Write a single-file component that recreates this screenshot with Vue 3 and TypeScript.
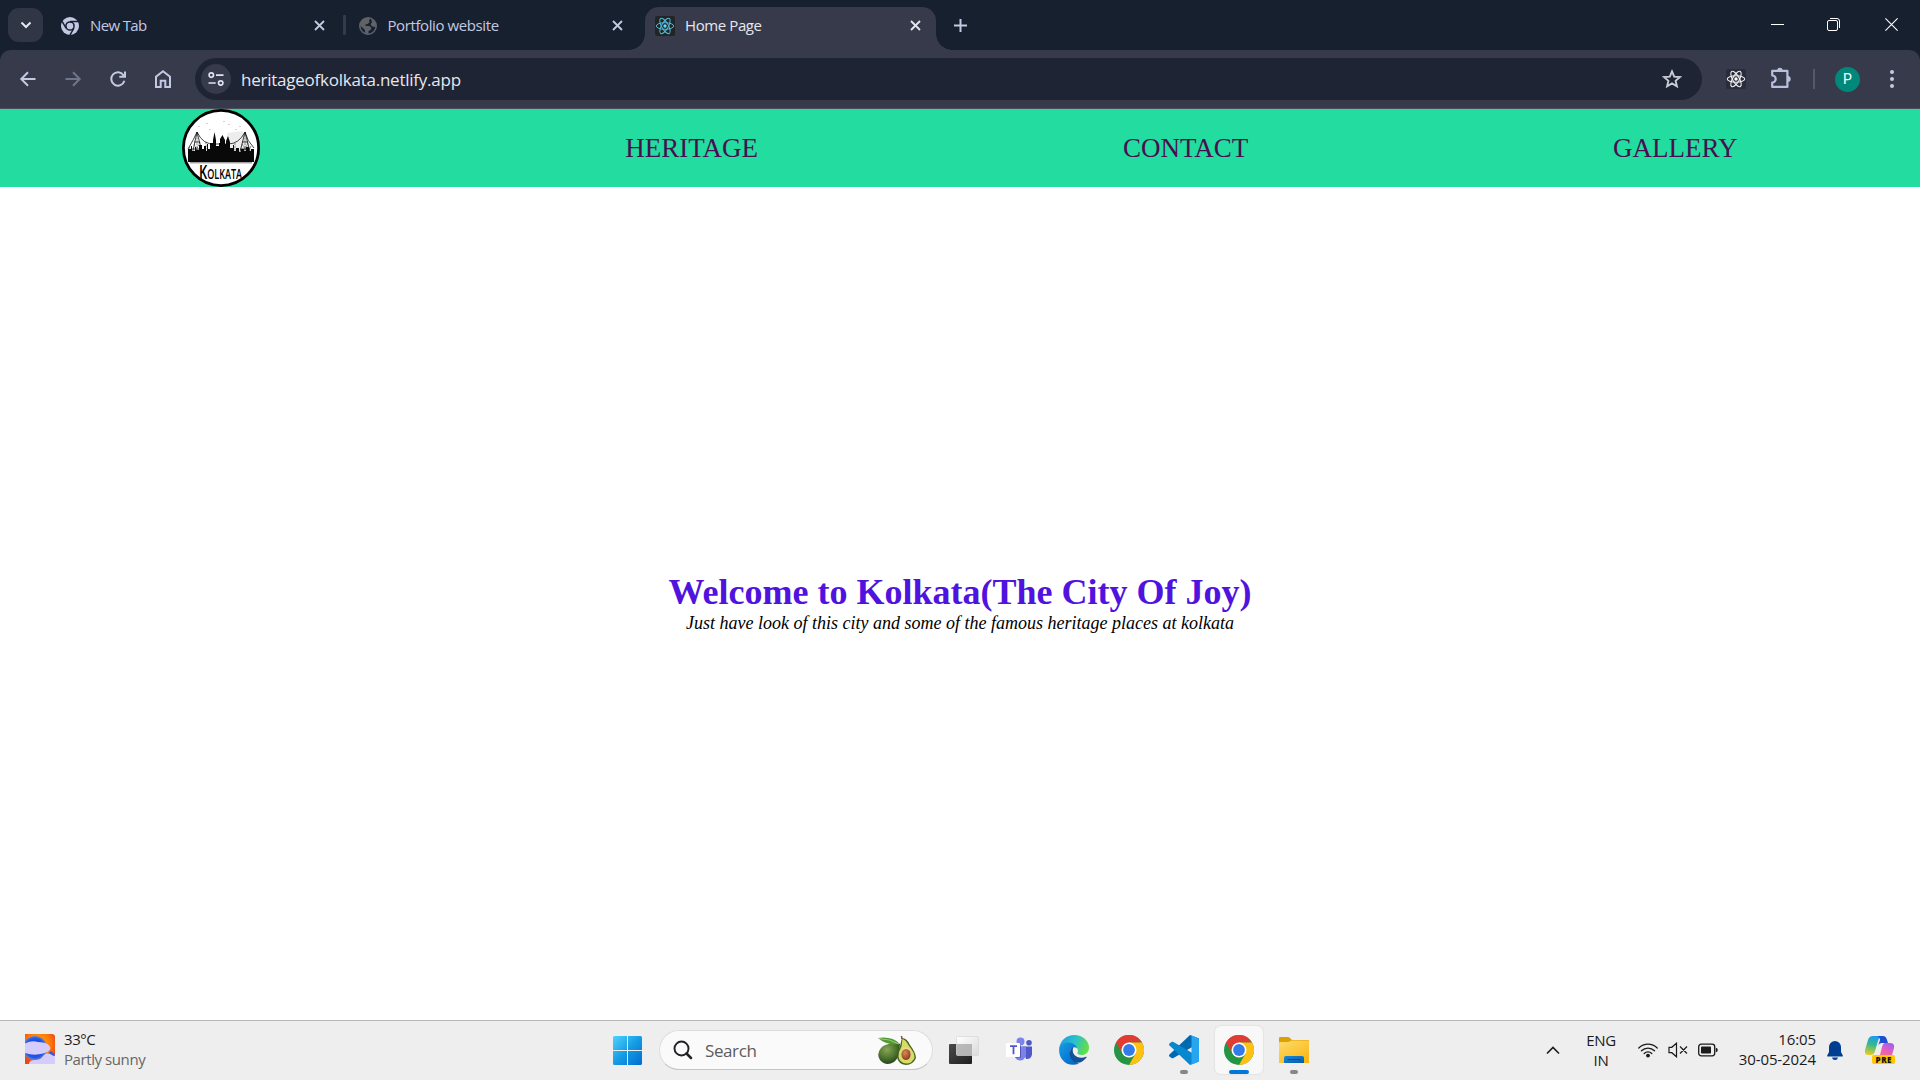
<script setup lang="ts">
interface Tab {
  title: string
  icon: 'chrome' | 'globe' | 'react'
  active?: boolean
}

const tabs: Tab[] = [
  { title: 'New Tab', icon: 'chrome' },
  { title: 'Portfolio website', icon: 'globe' },
  { title: 'Home Page', icon: 'react', active: true },
]

const links: string[] = ['HERITAGE', 'CONTACT', 'GALLERY']
const orbits: number[] = [0, 60, 120]
</script>

<template>
  <div class="screen">
    <!-- Tab strip -->
    <header class="strip">
      <button class="tab-search">
        <svg width="12" height="8" viewBox="0 0 12 8"><path d="M1.5 1.5 6 6l4.500-4.500" fill="none" stroke="#e6e8f0" stroke-width="2" /></svg>
      </button>
      <div class="tabs">
        <div v-for="tab in tabs" :key="tab.title" class="tab" :class="{ active: tab.active }">
          <svg v-if="tab.icon === 'chrome'" class="fav" width="18" height="18" viewBox="0 0 18 18">
            <circle cx="9" cy="9" r="9" fill="#c3c9e3" />
            <circle cx="9" cy="9" r="4.100" fill="none" stroke="#17202f" stroke-width="1.500" />
            <path d="M9 4.500h8M5.100 11.250 1.100 4.320M12.900 11.250 8.900 18.180" stroke="#17202f" stroke-width="1.500" />
          </svg>
          <svg v-else-if="tab.icon === 'globe'" class="fav" width="18" height="18" viewBox="0 0 18 18">
            <circle cx="9" cy="9" r="8.200" fill="#17202f" stroke="#5f6368" stroke-width="1.600" />
            <path d="M1.500 6 4 2 9 .8 11.500 1.500 10 3.500 10.500 5.500 8.500 7 6.500 7.500V9H10.500L12.500 11 11.500 13 9.500 14V17L6 16.500V13.500L4.500 11.500 1 8.500Z" fill="#5f6368" />
            <path d="M12 2 16 5 17 9.500 15 10 12.500 9 11.500 7 13 5.500Z" fill="#5f6368" />
          </svg>
          <svg v-else class="fav react" width="20" height="20" viewBox="0 0 20 20">
            <rect width="20" height="20" rx="2" fill="#222426" />
            <g fill="none" stroke="#53b9d4" stroke-width="1">
              <ellipse v-for="a in orbits" :key="a" cx="10" cy="10" rx="8.700" ry="3.300" :transform="`rotate(${a} 10 10)`" />
            </g>
            <circle cx="10" cy="10" r="1.700" fill="#61dafb" />
          </svg>
          <span class="title">{{ tab.title }}</span>
          <svg class="close" width="11" height="11" viewBox="0 0 11 11"><path d="m1 1 9 9M10 1l-9 9" fill="none" stroke="currentColor" stroke-width="1.800" /></svg>
        </div>
      </div>
      <svg class="plus" width="13" height="13" viewBox="0 0 13 13"><path d="M6.500 0v13M0 6.500h13" stroke="#c3c9e3" stroke-width="2" /></svg>
      <div class="window-controls">
        <svg width="13" height="13" viewBox="0 0 13 13"><path d="M0 6.500h13" stroke="#fff" /></svg>
        <svg width="13" height="13" viewBox="0 0 13 13" fill="none" stroke="#fff">
          <rect x=".5" y="2.500" width="10" height="10" rx="1.500" />
          <path d="M3 .5h7a2.500 2.500 0 0 1 2.500 2.500v7" />
        </svg>
        <svg width="13" height="13" viewBox="0 0 13 13"><path d="m.4.400 12.200 12.200M12.600.400.400 12.600" stroke="#fff" stroke-width="1.100" /></svg>
      </div>
    </header>

    <!-- Toolbar -->
    <div class="toolbar-back">
      <div class="toolbar">
        <div class="nav-icons">
          <svg width="20" height="20" viewBox="0 0 20 20" fill="none" stroke="#c3c9e3" stroke-width="2"><path d="M17.500 10H4M10 3.300 3.300 10l6.700 6.700" /></svg>
          <svg width="20" height="20" viewBox="0 0 20 20" fill="none" stroke="#70768a" stroke-width="2"><path d="M2.500 10H16M10 3.300l6.700 6.700-6.700 6.700" /></svg>
          <svg width="20" height="20" viewBox="0 0 20 20" fill="none" stroke="#c3c9e3" stroke-width="2"><path d="M16.400 11.800A6.700 6.700 0 1 1 15.500 6.200L17 7.500M17 2.500V7.700H11.300" /></svg>
          <svg width="20" height="20" viewBox="0 0 20 20" fill="none" stroke="#c3c9e3" stroke-width="2"><path d="M3 18V7.700L10 2.200l7 5.500V18h-4.700v-6.200H7.700V18Z" /></svg>
        </div>
        <div class="omnibox">
          <span class="site-info">
            <svg width="16" height="14" viewBox="0 0 16 14" fill="none" stroke="#dfe2f0" stroke-width="1.700">
              <circle cx="3.300" cy="3.100" r="2.200" /><path d="M8 3.100h7.500M.5 11h7.200" /><circle cx="12.700" cy="11" r="2.200" />
            </svg>
          </span>
          <span class="url">heritageofkolkata.netlify.app</span>
          <svg class="star" width="20" height="20" viewBox="0 0 20 20"><path d="m10 2.400 2.200 5.200 5.700.5-4.300 3.700 1.300 5.500L10 14.400l-4.900 2.900 1.300-5.500-4.300-3.700 5.700-.5Z" fill="none" stroke="#c9ccd6" stroke-width="1.900" /></svg>
        </div>
        <div class="extensions">
          <svg width="20" height="20" viewBox="0 0 20 20">
            <rect width="20" height="20" rx="2" fill="#292d3a" />
            <g fill="none" stroke="#f0f0f3" stroke-width="1.100">
              <ellipse v-for="a in orbits" :key="a" cx="10" cy="10" rx="8.700" ry="3.300" :transform="`rotate(${a} 10 10)`" />
            </g>
            <circle cx="10" cy="10" r="1.700" fill="#fff" />
          </svg>
          <svg class="puzzle" width="22" height="22" viewBox="0 0 22 22">
            <path d="M2.200 3.900h15.200V19.900H2.200V15.500a3.500 3.500 0 0 0 0-7Z" fill="none" stroke="#b8c0de" stroke-width="2.200" stroke-linejoin="round" />
            <path d="M7.200 3.500a2.700 2.700 0 0 1 5.400 0ZM17.800 9a2.900 2.900 0 0 1 0 5.800Z" fill="#b8c0de" />
          </svg>
          <i class="divider"></i>
          <span class="avatar">P</span>
          <svg class="dots" width="4" height="18" viewBox="0 0 4 18" fill="#c3c9e3"><circle cx="2" cy="2" r="2" /><circle cx="2" cy="9" r="2" /><circle cx="2" cy="16" r="2" /></svg>
        </div>
      </div>
    </div>

    <!-- Website -->
    <nav class="site-nav">
      <svg class="logo" width="78" height="78" viewBox="0 0 78 78">
        <circle cx="39" cy="39" r="37.600" fill="#fff" stroke="#000" stroke-width="2.800" />
        <path d="M45 24 60 22 69 38 70 50H45Z" fill="#ededed" />
        <g fill="none" stroke="#111" stroke-width=".8">
          <path d="M6 40Q12 30 15 23 21 36 33 35H46Q57 35 63 23 65 32 72 39" />
          <path d="M15 23 9 51M15 23l7 28M12 33h6M10 40h10M9 47h12M63 23l-7 28M63 23l7 28M60 33h6M58 40h10M57 47h12" />
          <path d="M15 23v28M63 23v28M24 33v18M53 34v18M7 38l6 11M12 35l7 14M18 33l-7 15M69 37l-6 14M60 35l9 14M66 34l-8 15" stroke-width=".5" stroke-dasharray="2 .8" />
          <path d="M17 17v1M25 14v1M47 15v1M54 20v1M28 20v1M58 17v1M42 12v1" stroke-width=".4" />
        </g>
        <path d="M6 53V40H9V37H10V42H13V38H14V41H17V36H20V40H22V37H24V42H25V35H26V40H28V34H31V31L32.500 23 34 31V37H37V34H38V30L40.500 26 43 31V35H44V32L46 27 48 33V39H51V36H52V42H54V39H57V43H59V40H62V42H64V38H67V42H69V40H72V53Z" fill="#090909" />
        <path d="M8 53.800h62" stroke="#555" stroke-width=".8" />
        <text class="logo-text" x="17" y="70" textLength="43" lengthAdjust="spacingAndGlyphs">Kolkata</text>
      </svg>
      <a v-for="link in links" :key="link">{{ link }}</a>
    </nav>
    <main class="hero">
      <h1>Welcome to Kolkata(The City Of Joy)</h1>
      <p>Just have look of this city and some of the famous heritage places at kolkata</p>
    </main>

    <!-- Taskbar -->
    <footer class="taskbar">
      <div class="weather">
        <svg width="30" height="30" viewBox="0 0 30 30">
          <defs>
            <radialGradient id="sky" cx=".45" cy=".35" r=".65"><stop offset="0" stop-color="#ffb000" /><stop offset=".6" stop-color="#ff7b08" /><stop offset="1" stop-color="#eb451d" /></radialGradient>
            <radialGradient id="sun" cx=".5" cy=".5" r=".5"><stop offset=".5" stop-color="#1747ec" /><stop offset=".8" stop-color="#2456e6" /><stop offset="1" stop-color="#6384cc" /></radialGradient>
          </defs>
          <path d="M0 0h27q3 0 3 3v27H0Z" fill="url(#sky)" />
          <circle cx="10" cy="14" r="12" fill="url(#sun)" />
          <path d="M19 23 26 17l4 4v9H17Z" fill="#2858f0" />
          <path d="M0 9.500Q7 6 13 8q11 0 12.500 6Q25 18 18 19.500 9 22 0 19Z" fill="#d6ccfb" />
          <path d="M4 30q0-4 6-4 6 0 8-4 4-5 9-1 2 1.500 3 .5V30Z" fill="#d6ccfb" />
        </svg>
        <div class="weather-text"><span>33°C</span><span class="muted">Partly sunny</span></div>
      </div>

      <div class="apps">
        <svg class="start" width="29" height="29" viewBox="0 0 29 29">
          <defs><linearGradient id="win" x1="0" y1="0" x2="29" y2="29" gradientUnits="userSpaceOnUse"><stop stop-color="#4fd3ff" /><stop offset=".5" stop-color="#159be4" /><stop offset="1" stop-color="#006cd0" /></linearGradient></defs>
          <path d="M1.500 0H14V14H0V1.500A1.500 1.500 0 0 1 1.500 0ZM15 0h12.500A1.500 1.500 0 0 1 29 1.500V14H15ZM0 15h14v14H1.500A1.500 1.500 0 0 1 0 27.500ZM15 15h14v12.500a1.500 1.500 0 0 1-1.500 1.500H15Z" fill="url(#win)" />
        </svg>
        <div class="search">
          <svg width="20" height="20" viewBox="0 0 20 20" fill="none" stroke="#202124"><circle cx="8.500" cy="8.500" r="7" stroke-width="1.900" /><path d="m13.500 13.500 4.500 4.500" stroke-width="2.500" stroke-linecap="round" /></svg>
          <span>Search</span>
          <svg class="avocado" width="38" height="29" viewBox="0 0 38 29">
            <defs>
              <radialGradient id="av" cx=".4" cy=".3" r=".7"><stop stop-color="#8ba655" /><stop offset=".6" stop-color="#4c742d" /><stop offset="1" stop-color="#28431b" /></radialGradient>
              <radialGradient id="pit" cx=".4" cy=".35" r=".65"><stop stop-color="#d88a57" /><stop offset="1" stop-color="#8b3e20" /></radialGradient>
            </defs>
            <path d="M22 8Q8 6 3 12-2 18 2 24q6 7 14 2 4-3 5-9Z" fill="url(#av)" />
            <path d="M0 2Q14 0 22 8 9 10 0 2Z" fill="#4f9a35" /><path d="M1 2.500Q12 3 21 8" stroke="#b0d77d" fill="none" stroke-width=".8" />
            <path d="M24 2Q29 2 32 9q6 8 6 13-3 7-10 7-8-1-9-8 0-6 3-11Z" fill="#436424" />
            <path d="M24.500 3Q28 4 31 10q6 7 5.500 12-3 6-8.500 5.500-7-1-7.500-7 0-5 3-10Z" fill="#d8db65" />
            <ellipse cx="28" cy="18" rx="5.300" ry="6.500" fill="#edd98c" /><ellipse cx="28" cy="18.500" rx="4.600" ry="5.600" fill="url(#pit)" />
            <path d="m24 3-.5-3" stroke="#865030" stroke-width="1.500" />
          </svg>
        </div>

        <div class="app">
          <svg width="30" height="30" viewBox="0 0 30 30">
            <defs>
              <linearGradient id="tv1" x2="1" y2="1"><stop stop-color="#4a4a4a" /><stop offset="1" stop-color="#1e1e1e" /></linearGradient>
              <linearGradient id="tv2" x2="1" y2="1"><stop stop-color="#fff" /><stop offset="1" stop-color="#dadada" /></linearGradient>
            </defs>
            <rect x="0" y="9" width="23" height="20" rx="1" fill="url(#tv1)" />
            <rect x="7.500" y="1.500" width="22" height="19" rx="1" fill="url(#tv2)" stroke="#d6d6d6" stroke-width=".7" />
            <path d="M8 9h15v11.500H8Z" fill="#999" opacity=".65" />
          </svg>
        </div>
        <div class="app">
          <svg width="28" height="26" viewBox="0 0 28 26">
            <circle cx="15.500" cy="4.500" r="4" fill="#7b83eb" /><circle cx="24" cy="5.800" r="2.800" fill="#5059c9" />
            <path d="M17 9.500h10v8q-1 5-6 4.500Z" fill="#5059c9" /><path d="M9 9.500h12v8q-1 6-6 6-4 0-5-4Z" fill="#7b83eb" />
            <path d="M10 8.500h6v12h-6Z" fill="#414a9b" opacity=".75" /><rect x="1" y="6" width="14" height="14" rx="1" fill="#fff" />
            <path d="M5 9.200h7M8.500 9.200v8" stroke="#5059c9" stroke-width="1.800" />
          </svg>
        </div>
        <div class="app">
          <svg width="30" height="30" viewBox="0 0 30 30">
            <defs>
              <linearGradient id="e1" x1="0" x2="1" y1=".2" y2=".5"><stop stop-color="#189edc" /><stop offset=".5" stop-color="#29c0ce" /><stop offset="1" stop-color="#66df45" /></linearGradient>
              <linearGradient id="e2" x2="1" y1="0" y2="1"><stop stop-color="#1b9de2" /><stop offset=".6" stop-color="#0679d6" /><stop offset="1" stop-color="#0a5fb4" /></linearGradient>
            </defs>
            <path d="M.2 14C1 5 8 0 15 0c9 0 15 6 15 12.500 0 5-3.500 7.500-7.500 7.500-3 0-4.500-1-4-2.200 1-2 .5-5.500-4-7C9 9 2 9 .2 14Z" fill="url(#e1)" />
            <path d="M.1 15C.1 9.500 5 7.200 9.500 7.500c5 .3 8 3 8.500 6-3-3-7-.2-7 4 0 5 4.500 9.500 9 11.300C8 33 0 24 .1 15Z" fill="url(#e2)" />
            <path d="M14.500 11.800C10 14 9 22 14 26c5 4 10 1 13.500-3.500q.5-1-.5-.7c-7 3.200-16-1.600-12.500-10Z" fill="#114f99" />
          </svg>
        </div>
        <div v-for="n in 2" :key="n" class="app" :class="n === 2 ? 'current' : ''">
          <svg width="30" height="30" viewBox="0 0 30 30">
            <circle cx="15" cy="15" r="15" fill="#259545" />
            <path d="M2 7.500A15 15 0 0 1 28 7.500H15L8.500 18.800Z" fill="#e23b31" />
            <path d="M28 7.500A15 15 0 0 1 15 30L21.500 18.800 15 7.500Z" fill="#fdc113" />
            <circle cx="15" cy="15" r="7.500" fill="#fff" /><circle cx="15" cy="15" r="5.900" fill="#347bea" />
          </svg>
          <i v-if="n === 2" class="bar"></i>
        </div>
        <div class="app code">
          <svg width="30" height="30" viewBox="0 0 30 30">
            <path d="M21 0 30 3.500V8L4.500 23q-1 .5-2 0L.5 21.500q-1-1 0-2Z" fill="#0069b0" />
            <path d="M21 30 30 26.500V22L4.500 7q-1-.500-2 0L.5 8.500q-1 1 0 2Z" fill="#0787cf" />
            <path d="M21 0l7.500 2.800Q30 3.500 30 5v20q0 1.500-1.500 2.200L21 30q1.500-.5 1.500-2V2q0-1.500-1.500-2Z" fill="#27a5f1" />
          </svg>
          <i class="pip"></i>
        </div>
        <div class="app">
          <svg width="30" height="28" viewBox="0 0 30 28">
            <defs>
              <linearGradient id="f1" x2=".7" y2="1"><stop stop-color="#ffdb6c" /><stop offset="1" stop-color="#f9b817" /></linearGradient>
              <linearGradient id="f2" x2="1" y2="1"><stop stop-color="#1888dc" /><stop offset="1" stop-color="#075ba8" /></linearGradient>
            </defs>
            <path d="M0 2Q0 1 1 1h8q1 0 2 1l2 2h16q1 0 1 1v4H0Z" fill="#dca000" />
            <path d="M0 7q0-1 1-1h8q1 0 2-.7L12.500 4.500H29q1 0 1 1V27H0Z" fill="url(#f1)" />
            <path d="M5 27v-5q0-2 2-2h16q2 0 2 2v5Z" fill="url(#f2)" /><path d="M9 23.500h12" stroke="#064a88" stroke-linecap="round" />
          </svg>
          <i class="pip"></i>
        </div>
      </div>

      <div class="tray">
        <svg class="chev" width="14" height="9" viewBox="0 0 14 9"><path d="m1 7.500 6-6 6 6" fill="none" stroke="#1b1b1b" stroke-width="1.600" /></svg>
        <div class="lang"><span>ENG</span><span>IN</span></div>
        <svg class="wifi" width="20" height="16" viewBox="0 0 20 16" fill="none" stroke="#1b1b1b" stroke-width="1.300" stroke-linecap="round">
          <path d="M.8 6a13 13 0 0 1 18.400 0M3.500 8.800a9.200 9.200 0 0 1 13 0M6.200 11.500a5.400 5.400 0 0 1 7.600 0" /><circle cx="10" cy="13.600" r="1.300" fill="#1b1b1b" />
        </svg>
        <svg class="volume" width="20" height="16" viewBox="0 0 20 16" fill="none" stroke="#1b1b1b" stroke-width="1.200"><path d="M1 5.300h2.800L8.500 1.200v13.600L3.800 10.700H1ZM12 4.500l7 7M19 4.500l-7 7" /></svg>
        <svg class="battery" width="20" height="14" viewBox="0 0 20 14"><rect x=".7" y="1.200" width="16" height="11.600" rx="2.500" fill="none" stroke="#1b1b1b" stroke-width="1.300" /><rect x="3" y="3.500" width="10" height="7" rx=".8" fill="#1b1b1b" /><path d="M17.800 4.800q2 .2 2 2.200t-2 2.200Z" fill="#1b1b1b" /></svg>
        <div class="clock"><span>16:05</span><span class="date">30-05-2024</span></div>
        <svg class="bell" width="16" height="19" viewBox="0 0 16 19" fill="#003e92"><path d="M8 0a6 6 0 0 1 6 6v5l1.800 3.600q.3 1-.7 1H.9q-1 0-.7-1L2 11V6A6 6 0 0 1 8 0ZM5 16.500h6Q10.500 19 8 19T5 16.500Z" /></svg>
        <svg class="copilot" width="30" height="30" viewBox="0 0 30 30">
          <defs>
            <linearGradient id="c1" x1=".5" x2=".3" y2="1"><stop stop-color="#1d9cee" /><stop offset=".45" stop-color="#35b98e" /><stop offset="1" stop-color="#e9cc20" /></linearGradient>
            <linearGradient id="c2" x1=".7" x2=".2" y2="1"><stop stop-color="#a95cf4" /><stop offset=".5" stop-color="#ed62ae" /><stop offset="1" stop-color="#ff784c" /></linearGradient>
          </defs>
          <path d="M8 1H17q-3 1-4 5L10 16q-1 4-4 4H3q-4 0-3-5L3 5Q4 1 8 1Z" fill="url(#c1)" />
          <path d="M12 1h6q3 0 4 4l1 3h-6q-3 0-4 3L15 5Q15 2 12 1Z" fill="#1e4fd2" />
          <path d="M20 8h5q5 0 4 5l-2 7q-1 5-6 5H11q3-1 4-5l2-8q1-4 3-4Z" fill="url(#c2)" />
          <rect x="7" y="20" width="23" height="9" rx="2" fill="#ffc800" />
          <text x="10.500" y="27.600" textLength="16" lengthAdjust="spacing" class="pre">PRE</text>
        </svg>
      </div>
    </footer>
  </div>
</template>

<style>
body {
  margin: 0;
  overflow: hidden;
}
</style>

<style scoped>
.screen {
  width: 1920px;
  height: 1080px;
  display: flex;
  flex-direction: column;
  background: #fff;
  font-family: "Open Sans", "Noto Sans", sans-serif;
}
svg {
  display: block;
  flex: none;
}
.logo {
  overflow: visible;
}
.strip {
  height: 50px;
  background: #17202f;
  display: flex;
  align-items: flex-start;
}
.tab-search {
  width: 35px;
  height: 34px;
  margin: 8px 2px 0 8px;
  padding: 0;
  border: 0;
  border-radius: 11px;
  background: #313647;
  display: grid;
  place-items: center;
}
.tabs {
  display: flex;
  padding-top: 7px;
}
.tab {
  position: relative;
  box-sizing: border-box;
  width: 300px;
  height: 43px;
  padding: 0 20px 6px 16px;
  display: flex;
  align-items: center;
  color: #c3c9e3;
  font-size: 15px;
}
.tab:nth-child(2) {
  padding-left: 14px;
  padding-right: 22px;
}
.tab:first-child::after {
  content: "";
  position: absolute;
  right: -1px;
  top: 8px;
  width: 3px;
  height: 20px;
  border-radius: 1px;
  background: #343a4b;
}
.tab.active {
  width: 291px;
  padding: 0 15px 6px 10px;
  border-radius: 14px 14px 0 0;
  background: #363a4b;
  color: #e6e7ee;
}
.tab.active::before,
.tab.active::after {
  content: "";
  position: absolute;
  bottom: 0;
  width: 16px;
  height: 16px;
  background: radial-gradient(circle at 0 0, transparent 15.500px, #363a4b 16px);
}
.tab.active::before {
  left: -16px;
}
.tab.active::after {
  right: -16px;
  transform: scaleX(-1);
}
.title {
  flex: 1;
  margin-left: 11px;
  padding-bottom: 1px;
  line-height: 20px;
  letter-spacing: -0.400px;
}
.tab:first-child .title {
  letter-spacing: -0.650px;
}
.tab:nth-child(2) .title {
  margin-left: 10.500px;
}
.active .title {
  margin-left: 10px;
}
.plus {
  margin: 19px 0 0 18px;
}
.window-controls {
  margin: 18px 22px 0 auto;
  display: flex;
  gap: 44px;
}
.window-controls svg:nth-child(2) {
  margin: 0 1px 0 -1px;
}
.toolbar-back {
  height: 59px;
  background: #17202f;
}
.toolbar {
  box-sizing: border-box;
  height: 59px;
  border-radius: 11px 11px 0 0;
  background: #363a4b;
  border-bottom: 1px solid #4b4d5a;
  display: flex;
  align-items: center;
}
.nav-icons {
  display: flex;
  gap: 25px;
  margin: 0 22px 0 18px;
}
.omnibox {
  width: 1507px;
  height: 42px;
  border-radius: 21px;
  background: #1f2434;
  display: flex;
  align-items: center;
}
.site-info {
  width: 30px;
  height: 30px;
  margin-left: 6px;
  border-radius: 50%;
  background: #363a4b;
  display: grid;
  place-items: center;
}
.url {
  margin-left: 10px;
  padding-top: 2px;
  color: #e6e7ee;
  font-size: 17px;
  line-height: 24px;
  letter-spacing: -0.240px;
}
.star {
  margin: 0 20px 0 auto;
}
.extensions {
  display: flex;
  align-items: center;
  margin-left: 23.500px;
}
.puzzle {
  margin-left: 24.500px;
  margin-top: -3px;
}
.divider {
  width: 2px;
  height: 20px;
  margin-left: 21px;
  background: #53586c;
}
.avatar {
  width: 25px;
  height: 25px;
  margin-left: 20px;
  border-radius: 50%;
  background: #00897b;
  color: #fff;
  font: 14px/25px Roboto, sans-serif;
  text-align: center;
}
.dots {
  margin-left: 30px;
}
.site-nav {
  height: 78px;
  background: #23dc9f;
  display: flex;
  align-items: center;
  justify-content: space-around;
}
.site-nav a {
  font: 27px/32px "Liberation Serif", serif;
  color: #470f50;
}
.logo-text {
  font-family: "Open Sans", sans-serif;
  font-size: 20px;
  font-weight: 600;
  font-variant-caps: small-caps;
}
.hero {
  flex: 1;
  display: flex;
  flex-direction: column;
  align-items: center;
  justify-content: center;
  padding-bottom: 1px;
  font-family: "Liberation Serif", serif;
}
.hero h1 {
  margin: 0;
  color: #5013df;
  font-size: 36px;
  line-height: 41px;
}
.hero p {
  margin: 0;
  color: #000;
  font-size: 18px;
  line-height: 21px;
  font-style: italic;
}
.taskbar {
  box-sizing: border-box;
  height: 60px;
  border-top: 1px solid #b9b9b9;
  background: #eeeeee;
  display: flex;
  align-items: center;
  padding-bottom: 1px;
  color: #1b1b1b;
  font-size: 15px;
}
.weather {
  width: 613px;
  padding-left: 25px;
  box-sizing: border-box;
  display: flex;
  align-items: center;
}
.weather svg {
  margin-top: -2px;
}
.weather-text {
  margin-left: 9px;
  padding-bottom: 3px;
  display: flex;
  flex-direction: column;
  line-height: 20px;
  letter-spacing: -0.420px;
}
.muted {
  color: #666;
}
.apps {
  display: flex;
  align-items: center;
}
.search {
  box-sizing: border-box;
  width: 274px;
  height: 40px;
  margin: 0 3px 0 17px;
  padding: 0 16px 0 13px;
  border: 1px solid #dedede;
  border-bottom-color: #c4c4c4;
  border-radius: 20px;
  background: #fafafa;
  display: flex;
  align-items: center;
}
.search span {
  margin-left: 12px;
  color: #5c5c5c;
  font-size: 17px;
  letter-spacing: -0.400px;
}
.avocado {
  margin-left: auto;
}
.app {
  position: relative;
  width: 48px;
  height: 48px;
  margin: 0 3.500px;
  border-radius: 6px;
  display: grid;
  place-items: center;
}
.app.current {
  order: 2;
  background: #f8f8f8;
  box-shadow: 0 0 1px 1px #e4e4e4;
}
.app.code {
  order: 1;
}
.app:last-child {
  order: 3;
}
.pip,
.bar {
  position: absolute;
  bottom: 0;
  left: 20px;
  width: 8px;
  height: 4px;
  border-radius: 2px;
  background: #868686;
}
.bar {
  left: 14px;
  width: 20px;
  background: #0078d7;
}
.tray {
  margin-left: auto;
  display: flex;
  align-items: center;
}
.lang {
  width: 50px;
  margin: 0 12px 0 16px;
  padding-bottom: 1px;
  display: flex;
  flex-direction: column;
  text-align: center;
  line-height: 20px;
  letter-spacing: -0.300px;
}
.volume {
  margin-left: 10px;
}
.battery {
  margin-left: 10px;
}
.clock {
  width: 98px;
  padding-bottom: 3px;
  display: flex;
  flex-direction: column;
  text-align: right;
  line-height: 20px;
  letter-spacing: -0.100px;
}
.bell {
  margin-left: 11px;
}
.copilot {
  margin: 0 25px 0 22px;
}
.pre {
  font: 800 8px "Open Sans", sans-serif;
  fill: #111;
}
</style>
